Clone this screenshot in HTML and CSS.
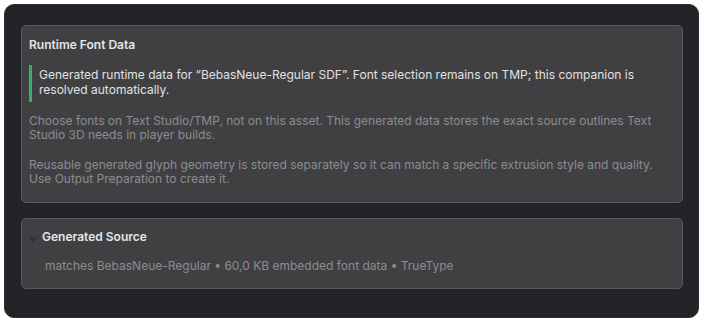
FILE: index.html
```html
<!DOCTYPE html>
<html>
<head>
<meta charset="utf-8">
<link rel="stylesheet" href="styles.css">
</head>
<body>
<div class="panel">
  <section class="card card-main">
    <h2 class="title">Runtime Font Data</h2>
    <div class="note">Generated runtime data for “BebasNeue-Regular SDF”. Font selection remains on TMP; this companion is resolved automatically.</div>
    <p class="muted">Choose fonts on Text Studio/TMP, not on this asset. This generated data stores the exact source outlines Text Studio 3D needs in player builds.</p>
    <p class="muted">Reusable generated glyph geometry is stored separately so it can match a specific extrusion style and quality. Use Output Preparation to create it.</p>
  </section>
  <section class="card card-source">
    <div class="fold">
      <span class="arrow"></span>
      <h3 class="fold-title">Generated Source</h3>
    </div>
    <div class="info">matches BebasNeue-Regular • 60,0 KB embedded font data • TrueType</div>
  </section>
</div>
</body>
</html>
```
FILE: styles.css
```css
html, body {
  margin: 0;
  padding: 0;
  background: #ffffff;
}
body {
  padding: 4px 5px 5px 4px;
  font-family: Inter, "Noto Sans", sans-serif;
  font-size: 12px;
}
.panel {
  box-sizing: border-box;
  width: 695px;
  height: 314px;
  background: #222327;
  border: 1px solid #2e2f33;
  border-radius: 10px;
  padding: 20px 15px 0 16px;
  display: flex;
  flex-direction: column;
  gap: 15px;
}
.card {
  background: #404043;
  border: 1px solid #5a5a5d;
  border-radius: 5px;
}
.card-main {
  height: 178px;
  box-sizing: border-box;
  padding: 11px 7px 0 7px;
}
.title {
  margin: 0;
  font-size: 12px;
  font-weight: 600;
  color: #e6e6e6;
  line-height: 15px;
}
.note {
  margin-top: 13px;
  border-left: 3px solid #2fb468;
  padding: 2px 0 5px 7px;
  color: #e2e2e2;
  line-height: 15px;
}
.muted {
  margin: 12px 0 0 0;
  color: #8c8c90;
  line-height: 14px;
}
.muted + .muted {
  margin-top: 16px;
}
.card-source {
  height: 71px;
  box-sizing: border-box;
  padding: 10px 7px 0 7px;
}
.fold {
  display: flex;
  align-items: center;
  gap: 5px;
}
.arrow {
  width: 0;
  height: 0;
  border-left: 4px solid transparent;
  border-right: 4px solid transparent;
  border-top: 6px solid #333336;
  margin-top: 6px;
}
.fold-title {
  margin: 0;
  font-size: 12px;
  font-weight: 600;
  color: #e6e6e6;
  line-height: 15px;
}
.info {
  margin: 14px 0 0 16px;
  color: #8c8c90;
  line-height: 15px;
}
```
